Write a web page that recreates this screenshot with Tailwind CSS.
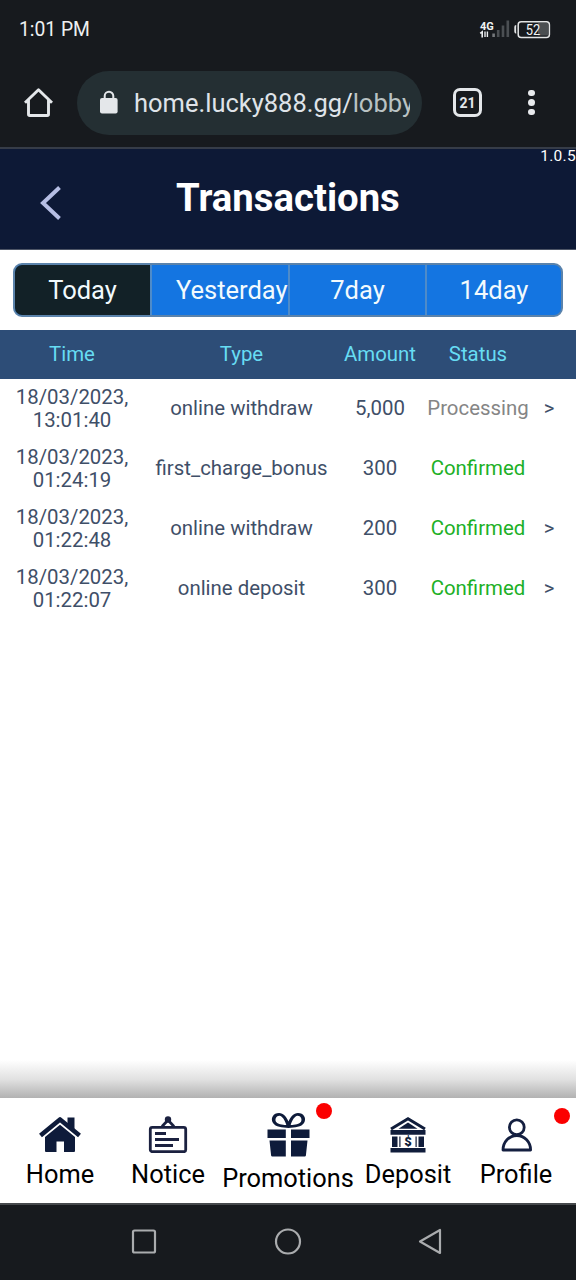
<!DOCTYPE html>
<html lang="en">
<head>
<meta charset="utf-8">
<title>Transactions</title>
<script src="https://cdn.jsdelivr.net/npm/@tailwindcss/browser@4"></script>
</head>
<body class="w-[576px] h-[1280px] overflow-hidden bg-white font-['Roboto',sans-serif] flex flex-col">
  <!-- Phone status bar -->
  <div class="h-[60px] shrink-0 bg-[#171a1e] flex items-center justify-between pl-[19px] pr-[25px] text-[#eef0f1]">
    <span class="text-[19.3px] leading-none">1:01 PM</span>
    <svg class="w-[72px] h-5 -mt-px" viewBox="0 0 72 20" fill="none">
      <text x="1" y="9.500" font-size="11" font-weight="700" fill="#f1f3f4" font-family="Roboto">4G</text>
      <path d="M1.200 13.400l2-1.600V17.500" stroke="#eceff1" stroke-width="1.600"/>
      <path d="M6 11.500V17M8.400 11.500V17" stroke="#eceff1" stroke-width="1.400"/>
      <path d="M14.600 13.500V17" stroke="#75797c" stroke-width="2.600"/>
      <path d="M19.200 10v7M24 5.500V17M28.800 .5V17" stroke="#4b4f53" stroke-width="2.600"/>
      <rect x="59" y="3" width="10" height="12.500" fill="#4b4f52"/>
      <rect x="39.200" y="1.700" width="31.200" height="15.700" rx="3" stroke="#e3e5e6" stroke-width="1.500"/>
      <path d="M37.200 5.800c-.9 0-1 .5-1 1.200v4.600c0 .7.100 1.200 1 1.200" stroke="#e3e5e6" stroke-width="1.800"/>
      <text x="54" y="14.500" text-anchor="middle" font-size="14" fill="#f1f3f4" font-family="Roboto" textLength="14.500" lengthAdjust="spacingAndGlyphs">52</text>
    </svg>
  </div>

  <!-- Browser toolbar -->
  <div class="h-[89px] shrink-0 bg-[#171a1e] border-b-2 border-[#363c48] flex items-center pl-6 pb-[2px]">
    <svg class="w-[29px] h-[30px] shrink-0" viewBox="0 0 29 30" fill="none" stroke="#e4e7ea" stroke-width="2.900" stroke-linejoin="round">
      <path d="M1 14.800L14.500 1.700 28 14.800M4.500 12v14.200a1.300 1.300 0 0 0 1.300 1.300h17.400a1.300 1.300 0 0 0 1.300-1.300V12"/>
    </svg>
    <div class="ml-6 w-[345px] h-16 shrink-0 rounded-full bg-[#242f33] flex items-center pl-[23px]">
      <svg class="w-[18px] h-6 shrink-0 mb-0.5" viewBox="0 0 18 24">
        <path d="M4.700 9V6a4.300 4.300 0 0 1 8.600 0v3" fill="none" stroke="#e4e7ea" stroke-width="2"/>
        <rect x="0" y="8" width="17.600" height="15.600" rx="2" fill="#e4e7ea"/>
      </svg>
      <div class="ml-4 w-[276px] overflow-hidden whitespace-nowrap text-[25.500px] leading-8 text-[#dfe3e8]">home.lucky888.gg/<span class="text-[#b9c2c3]">lobby</span></div>
    </div>
    <div class="ml-[31px] w-[29px] h-[29px] shrink-0 rounded-[7px] border-[3px] border-[#e4e7ea] flex items-center justify-center text-[14px] font-bold leading-none text-[#e4e7ea]">21</div>
    <div class="ml-[46px] flex flex-col gap-[3px]">
      <i class="size-[6.500px] rounded-full bg-[#e8eaed]"></i>
      <i class="size-[6.500px] rounded-full bg-[#e8eaed]"></i>
      <i class="size-[6.500px] rounded-full bg-[#e8eaed]"></i>
    </div>
  </div>

  <!-- Page header -->
  <header class="relative h-[101px] shrink-0 bg-[#0d1936] border-b border-[#4d5566] flex items-center">
    <svg class="ml-[39px] mt-2 w-[22px] h-[34px]" viewBox="0 0 22 34" fill="none" stroke="#b6bee4" stroke-width="4"><path d="M20.500 1.500L4 17l16.500 15.500"/></svg>
    <h1 class="ml-[115px] mb-px text-[38.300px] leading-none font-bold text-white whitespace-nowrap">Transactions</h1>
    <span class="absolute right-0 top-0 text-[15.500px] leading-[15px] tracking-[0.3px] text-white">1.0.5</span>
  </header>

  <!-- Range tabs -->
  <div class="h-20 shrink-0 px-[13px] pt-[13px]">
    <div class="h-[54px] w-[550px] rounded-[9px] border-2 border-[#5b83ab] bg-[#1475e1] overflow-hidden grid grid-cols-[135px_138px_137px_136px] text-[25.500px] leading-[51px] text-[#f2fafd] text-center">
      <div class="bg-[#122127]">Today</div>
      <div class="border-l-2 border-[#4e8bc9] overflow-hidden pl-6 text-left whitespace-nowrap">Yesterday</div>
      <div class="border-l-2 border-[#4e8bc9]">7day</div>
      <div class="border-l-2 border-[#4e8bc9]">14day</div>
    </div>
  </div>

  <!-- Transactions table -->
  <main class="grow text-[20.400px] text-[#3f4f68]">
    <div class="h-[49px] bg-[#2d4d77] text-[#67dcf3] grid grid-cols-[144px_195px_82px_114px_28px] items-center text-center leading-6 pb-0.5">
      <span>Time</span><span>Type</span><span>Amount</span><span>Status</span>
    </div>
    <div class="h-[60px] grid grid-cols-[144px_195px_82px_114px_28px] items-center text-center leading-[23.500px] pb-px">
      <span class="pt-px">18/03/2023,<br>13:01:40</span><span>online withdraw</span><span>5,000</span><span class="text-[#858585]">Processing</span><span>&gt;</span>
    </div>
    <div class="h-[60px] grid grid-cols-[144px_195px_82px_114px_28px] items-center text-center leading-[23.500px] pb-px">
      <span class="pt-px">18/03/2023,<br>01:24:19</span><span>first_charge_bonus</span><span>300</span><span class="text-[#20b026]">Confirmed</span>
    </div>
    <div class="h-[60px] grid grid-cols-[144px_195px_82px_114px_28px] items-center text-center leading-[23.500px] pb-px">
      <span class="pt-px">18/03/2023,<br>01:22:48</span><span>online withdraw</span><span>200</span><span class="text-[#20b026]">Confirmed</span><span>&gt;</span>
    </div>
    <div class="h-[60px] grid grid-cols-[144px_195px_82px_114px_28px] items-center text-center leading-[23.500px] pb-px">
      <span class="pt-px">18/03/2023,<br>01:22:07</span><span>online deposit</span><span>300</span><span class="text-[#20b026]">Confirmed</span><span>&gt;</span>
    </div>
  </main>

  <!-- Bottom navigation -->
  <div class="h-[38px] shrink-0 bg-linear-to-b from-white via-[#e2e2e2] to-[#b2b2b2]"></div>
  <nav class="h-[105px] shrink-0 bg-white grid grid-cols-[120px_96px_144px_96px_120px] text-[25.400px] leading-7 text-black">
    <div class="flex flex-col items-center pt-[17px]">
      <svg class="w-[44px] h-[38px]" viewBox="0 0 44 38" fill="#0e1b3a">
        <path d="M29.500 2.500h7v14l-7-6z"/>
        <path d="M2.500 20.500L22 4.500l19.500 16" fill="none" stroke="#0e1b3a" stroke-width="4.600" stroke-linejoin="round"/>
        <path d="M22 9.800L37 22v14a1 1 0 0 1-1 1H26V26.500h-7.500V37H8a1 1 0 0 1-1-1V22z"/>
      </svg>
      <span class="mt-[7px]">Home</span>
    </div>
    <div class="flex flex-col items-center pt-[17px]">
      <svg class="w-[40px] h-[38px]" viewBox="0 0 40 38" fill="none" stroke="#1b2140" stroke-width="2.800">
        <rect x="2.300" y="12.300" width="35.400" height="24.400" rx="2"/>
        <path d="M14 11.500l6-6.500 6 6.500"/><circle cx="20" cy="4.500" r="3.200" fill="#1b2140" stroke="none"/>
        <path d="M7 18.500h11M7 24.500h24M7 30.500h18"/>
      </svg>
      <span class="mt-[7px]">Notice</span>
    </div>
    <div class="relative flex flex-col items-center pt-[13px]">
      <svg class="w-[44px] h-[46px] ml-0.5" viewBox="0 0 44 46" fill="#0e1b3a">
        <path fill-rule="evenodd" d="M21.500 17C15 16.500 8.500 16 6 12 3 7 6.500 2 12 2c4.500 0 7.500 4 9.500 8.500C23.500 6 26.500 2 31 2c5.500 0 9 5 6 10-2.500 4-9 4.500-15.500 5zM19.300 14C18 9.500 15.500 5 12.500 4.700 9.500 4.500 7.500 8 9 10.700c1.500 2.500 6 3 10.300 3.300zM23.700 14c4.300-.3 8.800-.8 10.300-3.300 1.500-2.700-.5-6.200-3.500-6C27.500 5 25 9.500 23.700 14z"/>
        <path d="M.5 18.500h18.300v8.500H.5zM24 18.500h18.500v8.500H24zM2.500 29.500h16.300v16H5.300a1.200 1.200 0 0 1-1.200-1zM24 29.500h16.500l-1.600 15a1.200 1.200 0 0 1-1.200 1H24z"/>
      </svg>
      <span class="mt-[7px]">Promotions</span>
      <i class="absolute left-[100px] top-[5px] size-4 rounded-full bg-[#fb0000]"></i>
    </div>
    <div class="flex flex-col items-center pt-[17px]">
      <svg class="w-[38px] h-[38px]" viewBox="0 0 38 38" fill="#101d3b">
        <path d="M2 14L19 3.700 36 14" fill="none" stroke="#101d3b" stroke-width="3"/>
        <path d="M19 7.500l9.500 6.300h-19z"/>
        <path d="M1.500 15h35v4.800h-35zM3 21.500h5.500v10.500H3zM29.500 21.500H35v10.500h-5.500zM1.500 33h35v4.500h-35zM10.300 21.500h1.200v10.500h-1.200zM26.500 21.500h1.200v10.500h-1.200z"/>
        <text x="19" y="31.200" text-anchor="middle" font-family="Roboto" font-size="13" font-weight="900">$</text>
      </svg>
      <span class="mt-[7px]">Deposit</span>
    </div>
    <div class="relative flex flex-col items-center pt-[17px]">
      <svg class="w-[34px] h-[38px]" viewBox="0 0 34 38" fill="none" stroke="#141f40" stroke-width="2.800" stroke-linejoin="round">
        <circle cx="17.800" cy="12.300" r="7.400"/>
        <path d="M4 35c0-8 6-14.500 13.800-14.500S31.600 27 31.600 35z"/>
      </svg>
      <span class="mt-[7px]">Profile</span>
      <i class="absolute right-[6px] top-[10px] size-4 rounded-full bg-[#fb0000]"></i>
    </div>
  </nav>

  <!-- Android system navigation -->
  <div class="h-[77px] shrink-0 bg-[#171a1e] border-t-2 border-[#46494c] grid grid-cols-[144px_144px_144px] justify-items-center items-center px-[72px] pb-1">
    <svg class="size-7" viewBox="0 0 28 28" fill="none" stroke="#aaacae" stroke-width="2.200"><rect x="3" y="3.500" width="22" height="22" rx="1.500"/></svg>
    <svg class="size-7" viewBox="0 0 28 28" fill="none" stroke="#aaacae" stroke-width="2.200"><circle cx="14" cy="14.500" r="12"/></svg>
    <svg class="size-7" viewBox="0 0 28 28" fill="none" stroke="#aaacae" stroke-width="2.200" stroke-linejoin="round"><path d="M2 14.500L22 3v23z"/></svg>
  </div>
</body>
</html>
